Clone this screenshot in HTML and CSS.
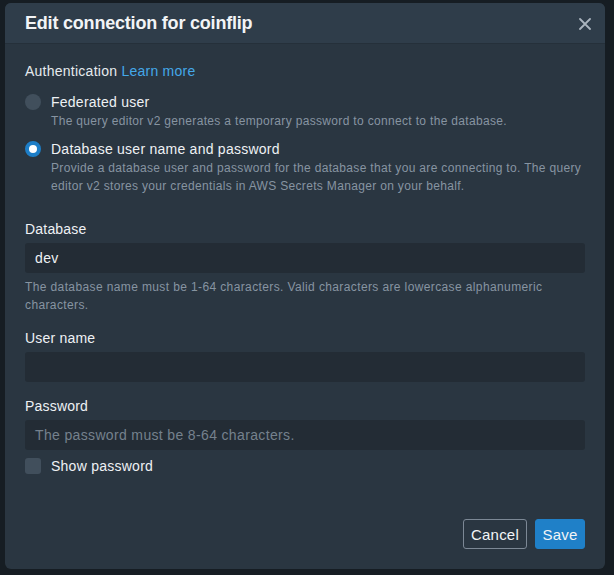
FILE: index.html
```html
<!DOCTYPE html>
<html>
<head>
<meta charset="utf-8">
<link rel="stylesheet" href="styles.css">
</head>
<body>
<div class="backdrop">
  <div class="modal">
    <div class="header">
      <h1 class="title">Edit connection for coinflip</h1>
      <svg class="close" width="12" height="12" viewBox="0 0 12 12"><path d="M1 1 L11 11 M11 1 L1 11" stroke="#aab4be" stroke-width="1.8" stroke-linecap="round"/></svg>
    </div>
    <div class="body">
      <div class="auth">Authentication <a class="link">Learn more</a></div>
      <div class="radio-row">
        <span class="radio"></span>
        <div>
          <div class="radio-label">Federated user</div>
          <div class="desc">The query editor v2 generates a temporary password to connect to the database.</div>
        </div>
      </div>
      <div class="radio-row second">
        <span class="radio checked"></span>
        <div>
          <div class="radio-label">Database user name and password</div>
          <div class="desc">Provide a database user and password for the database that you are connecting to. The query editor v2 stores your credentials in AWS Secrets Manager on your behalf.</div>
        </div>
      </div>

      <div class="field first">
        <div class="label">Database</div>
        <div class="input">dev</div>
        <div class="hint">The database name must be 1-64 characters. Valid characters are lowercase alphanumeric characters.</div>
      </div>
      <div class="field">
        <div class="label">User name</div>
        <div class="input"></div>
      </div>
      <div class="field pw">
        <div class="label">Password</div>
        <div class="input placeholder">The password must be 8-64 characters.</div>
      </div>
      <div class="check-row">
        <span class="checkbox"></span>
        <span class="check-label">Show password</span>
      </div>
    </div>
    <div class="footer">
      <button class="btn cancel">Cancel</button>
      <button class="btn save">Save</button>
    </div>
  </div>
</div>
</body>
</html>
```
FILE: styles.css
```css
html, body {
  margin: 0;
  padding: 0;
  background: #161d23;
  font-family: "Liberation Sans", Arial, sans-serif;
}
.backdrop {
  width: 614px;
  height: 575px;
  padding: 3px 9px 0 5px;
  box-sizing: border-box;
}
.modal {
  width: 600px;
  height: 566px;
  background: #2a3641;
  border-radius: 6px;
  display: flex;
  flex-direction: column;
  overflow: hidden;
}
.header {
  height: 39px;
  background: #2f3d4a;
  border-bottom: 1px solid #25303a;
  display: flex;
  align-items: center;
  justify-content: space-between;
  padding: 1px 14px 0 20px;
  flex-shrink: 0;
}
.title {
  margin: 0;
  font-size: 18px;
  font-weight: bold;
  color: #f2f4f6;
  letter-spacing: -0.2px;
}
.close { display: block; }
.body {
  padding: 18px 20px 0 20px;
  flex: 1;
}
.auth {
  font-size: 14px;
  color: #e6eaee;
  line-height: 18px;
  letter-spacing: 0.25px;
}
.link { color: #44a8e8; }
.radio-row {
  display: flex;
  gap: 10px;
  margin-top: 13px;
}
.radio-row.second { margin-top: 10px; }
.radio {
  width: 16px;
  height: 16px;
  border-radius: 50%;
  background: #414f5c;
  flex-shrink: 0;
  margin-top: 1px;
  box-sizing: border-box;
}
.radio.checked {
  background: #fff;
  border: 4.5px solid #1d7ec7;
}
.radio-label {
  font-size: 14px;
  color: #eef1f4;
  line-height: 18px;
  letter-spacing: 0.25px;
}
.desc {
  font-size: 12px;
  color: #8794a1;
  line-height: 18px;
  margin-top: 1px;
  letter-spacing: 0.33px;
}
.field.first { margin-top: 25px; }
.field { margin-top: 15px; }
.label {
  font-size: 14px;
  color: #eef1f4;
  line-height: 18px;
  letter-spacing: 0.2px;
}
.input {
  margin-top: 5px;
  height: 30px;
  background: #232c35;
  border-radius: 3px;
  box-sizing: border-box;
  padding: 0 10px;
  font-size: 14px;
  line-height: 30px;
  color: #eef1f4;
  letter-spacing: 0.35px;
}
.input.placeholder { color: #75818d; }
.hint {
  font-size: 12px;
  color: #8794a1;
  line-height: 18px;
  margin-top: 5px;
  letter-spacing: 0.38px;
}
.check-row {
  display: flex;
  align-items: center;
  gap: 10px;
  margin-top: 8px;
}
.checkbox {
  width: 16px;
  height: 16px;
  border-radius: 3px;
  background: #414f5c;
}
.check-label {
  font-size: 14px;
  color: #eef1f4;
  letter-spacing: 0.25px;
}
.footer {
  display: flex;
  justify-content: flex-end;
  gap: 8px;
  padding: 0 20px 20px 0;
}
.btn {
  height: 30px;
  border-radius: 3px;
  font-family: "Liberation Sans", Arial, sans-serif;
  font-size: 15px;
  font-weight: normal;
  color: #f2f4f6;
  padding: 0;
  box-sizing: border-box;
  letter-spacing: 0.2px;
}
.cancel {
  background: #2a3641;
  border: 1px solid #7c8895;
  width: 64px;
}
.save {
  background: #1f80c8;
  border: 1px solid #1f80c8;
  width: 50px;
}
```
